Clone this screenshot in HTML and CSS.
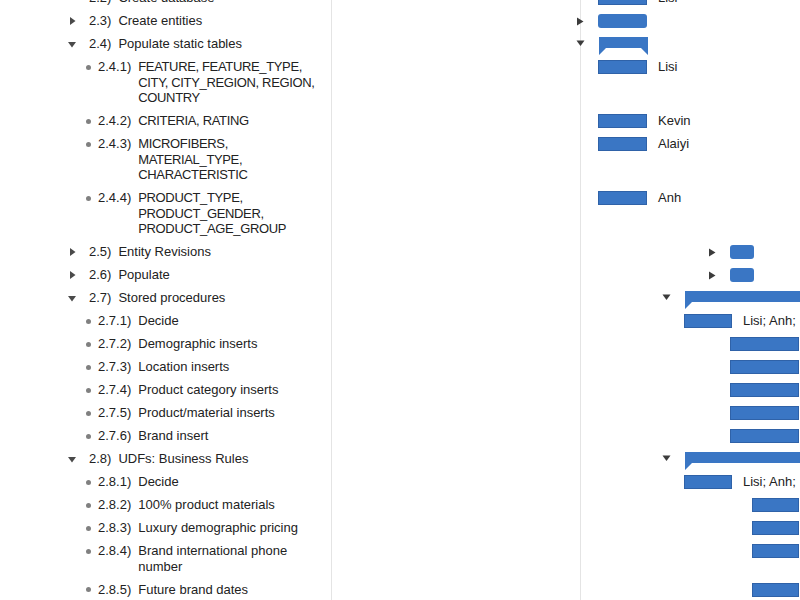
FILE: index.html
```html
<!DOCTYPE html>
<html>
<head>
<meta charset="utf-8">
<link rel="stylesheet" href="styles.css">
</head>
<body>
<div class="sheet">
  <div class="row">
    <div class="outline l2"><span class="tog"></span><span class="num">2.2)</span><span class="title">Create database</span></div>
    <div class="mid"></div>
    <div class="gantt" style="padding-left:17px"><span class="bar task" style="width:49px"></span><span class="who">Lisi</span></div>
  </div>
  <div class="row">
    <div class="outline l2"><span class="tog"><svg width="10" height="10" viewBox="0 0 10 10"><path d="M3 1 L8.5 5 L3 9 Z"/></svg></span><span class="num">2.3)</span><span class="title">Create entities</span></div>
    <div class="mid"></div>
    <div class="gantt" style="padding-left:17px"><span class="gtog"><svg width="8" height="9" viewBox="0 0 8 9"><path d="M1 0.5 L7.5 4.5 L1 8.5 Z"/></svg></span><span class="bar summary" style="width:49px"></span></div>
  </div>
  <div class="row">
    <div class="outline l2"><span class="tog"><svg width="10" height="10" viewBox="0 0 10 10"><path d="M1 3 L9 3 L5 8.5 Z"/></svg></span><span class="num">2.4)</span><span class="title">Populate static tables</span></div>
    <div class="mid"></div>
    <div class="gantt" style="padding-left:17px"><span class="gtog down"><svg width="9" height="7" viewBox="0 0 9 7"><path d="M0.5 0.5 L8.5 0.5 L4.5 6 Z"/></svg></span><span class="bar group" style="width:49px"></span></div>
  </div>
  <div class="row">
    <div class="outline l3"><span class="dot"></span><span class="num">2.4.1)</span><span class="title caps">FEATURE, FEATURE_TYPE, CITY, CITY_REGION, REGION, COUNTRY</span></div>
    <div class="mid"></div>
    <div class="gantt" style="padding-left:17px"><span class="bar task" style="width:49px"></span><span class="who">Lisi</span></div>
  </div>
  <div class="row">
    <div class="outline l3"><span class="dot"></span><span class="num">2.4.2)</span><span class="title caps">CRITERIA, RATING</span></div>
    <div class="mid"></div>
    <div class="gantt" style="padding-left:17px"><span class="bar task" style="width:49px"></span><span class="who">Kevin</span></div>
  </div>
  <div class="row">
    <div class="outline l3"><span class="dot"></span><span class="num">2.4.3)</span><span class="title caps">MICROFIBERS, MATERIAL_TYPE, CHARACTERISTIC</span></div>
    <div class="mid"></div>
    <div class="gantt" style="padding-left:17px"><span class="bar task" style="width:49px"></span><span class="who">Alaiyi</span></div>
  </div>
  <div class="row">
    <div class="outline l3"><span class="dot"></span><span class="num">2.4.4)</span><span class="title caps">PRODUCT_TYPE, PRODUCT_GENDER, PRODUCT_AGE_GROUP</span></div>
    <div class="mid"></div>
    <div class="gantt" style="padding-left:17px"><span class="bar task" style="width:49px"></span><span class="who">Anh</span></div>
  </div>
  <div class="row">
    <div class="outline l2"><span class="tog"><svg width="10" height="10" viewBox="0 0 10 10"><path d="M3 1 L8.5 5 L3 9 Z"/></svg></span><span class="num">2.5)</span><span class="title">Entity Revisions</span></div>
    <div class="mid"></div>
    <div class="gantt" style="padding-left:149px"><span class="gtog"><svg width="8" height="9" viewBox="0 0 8 9"><path d="M1 0.5 L7.5 4.5 L1 8.5 Z"/></svg></span><span class="bar summary" style="width:24px"></span></div>
  </div>
  <div class="row">
    <div class="outline l2"><span class="tog"><svg width="10" height="10" viewBox="0 0 10 10"><path d="M3 1 L8.5 5 L3 9 Z"/></svg></span><span class="num">2.6)</span><span class="title">Populate</span></div>
    <div class="mid"></div>
    <div class="gantt" style="padding-left:149px"><span class="gtog"><svg width="8" height="9" viewBox="0 0 8 9"><path d="M1 0.5 L7.5 4.5 L1 8.5 Z"/></svg></span><span class="bar summary" style="width:24px"></span></div>
  </div>
  <div class="row">
    <div class="outline l2"><span class="tog"><svg width="10" height="10" viewBox="0 0 10 10"><path d="M1 3 L9 3 L5 8.5 Z"/></svg></span><span class="num">2.7)</span><span class="title">Stored procedures</span></div>
    <div class="mid"></div>
    <div class="gantt" style="padding-left:103px"><span class="gtog down"><svg width="9" height="7" viewBox="0 0 9 7"><path d="M0.5 0.5 L8.5 0.5 L4.5 6 Z"/></svg></span><span class="bar group cont"></span></div>
  </div>
  <div class="row">
    <div class="outline l3"><span class="dot"></span><span class="num">2.7.1)</span><span class="title">Decide</span></div>
    <div class="mid"></div>
    <div class="gantt" style="padding-left:103px"><span class="bar task" style="width:48px"></span><span class="who">Lisi; Anh;</span></div>
  </div>
  <div class="row">
    <div class="outline l3"><span class="dot"></span><span class="num">2.7.2)</span><span class="title">Demographic inserts</span></div>
    <div class="mid"></div>
    <div class="gantt" style="padding-left:149px"><span class="bar task cont"></span></div>
  </div>
  <div class="row">
    <div class="outline l3"><span class="dot"></span><span class="num">2.7.3)</span><span class="title">Location inserts</span></div>
    <div class="mid"></div>
    <div class="gantt" style="padding-left:149px"><span class="bar task cont"></span></div>
  </div>
  <div class="row">
    <div class="outline l3"><span class="dot"></span><span class="num">2.7.4)</span><span class="title">Product category inserts</span></div>
    <div class="mid"></div>
    <div class="gantt" style="padding-left:149px"><span class="bar task cont"></span></div>
  </div>
  <div class="row">
    <div class="outline l3"><span class="dot"></span><span class="num">2.7.5)</span><span class="title">Product/material inserts</span></div>
    <div class="mid"></div>
    <div class="gantt" style="padding-left:149px"><span class="bar task cont"></span></div>
  </div>
  <div class="row">
    <div class="outline l3"><span class="dot"></span><span class="num">2.7.6)</span><span class="title">Brand insert</span></div>
    <div class="mid"></div>
    <div class="gantt" style="padding-left:149px"><span class="bar task cont"></span></div>
  </div>
  <div class="row">
    <div class="outline l2"><span class="tog"><svg width="10" height="10" viewBox="0 0 10 10"><path d="M1 3 L9 3 L5 8.5 Z"/></svg></span><span class="num">2.8)</span><span class="title">UDFs: Business Rules</span></div>
    <div class="mid"></div>
    <div class="gantt" style="padding-left:103px"><span class="gtog down"><svg width="9" height="7" viewBox="0 0 9 7"><path d="M0.5 0.5 L8.5 0.5 L4.5 6 Z"/></svg></span><span class="bar group cont"></span></div>
  </div>
  <div class="row">
    <div class="outline l3"><span class="dot"></span><span class="num">2.8.1)</span><span class="title">Decide</span></div>
    <div class="mid"></div>
    <div class="gantt" style="padding-left:103px"><span class="bar task" style="width:48px"></span><span class="who">Lisi; Anh;</span></div>
  </div>
  <div class="row">
    <div class="outline l3"><span class="dot"></span><span class="num">2.8.2)</span><span class="title">100% product materials</span></div>
    <div class="mid"></div>
    <div class="gantt" style="padding-left:171px"><span class="bar task cont"></span></div>
  </div>
  <div class="row">
    <div class="outline l3"><span class="dot"></span><span class="num">2.8.3)</span><span class="title">Luxury demographic pricing</span></div>
    <div class="mid"></div>
    <div class="gantt" style="padding-left:171px"><span class="bar task cont"></span></div>
  </div>
  <div class="row">
    <div class="outline l3"><span class="dot"></span><span class="num">2.8.4)</span><span class="title">Brand international phone number</span></div>
    <div class="mid"></div>
    <div class="gantt" style="padding-left:171px"><span class="bar task cont"></span></div>
  </div>
  <div class="row">
    <div class="outline l3"><span class="dot"></span><span class="num">2.8.5)</span><span class="title">Future brand dates</span></div>
    <div class="mid"></div>
    <div class="gantt" style="padding-left:171px"><span class="bar task cont"></span></div>
  </div>
  <div class="row filler">
    <div class="outline"></div>
    <div class="mid"></div>
    <div class="gantt"></div>
  </div>
</div>
</body>
</html>
```

FILE: styles.css
```css
html, body {
  margin: 0;
  padding: 0;
  background: #ffffff;
  overflow: hidden;
  width: 800px;
  height: 600px;
}

body {
  font-family: "Liberation Sans", Arial, Helvetica, sans-serif;
  font-size: 13px;
  color: #222222;
}

.sheet {
  margin-top: -14px;
}

.row {
  display: grid;
  grid-template-columns: 332px 249px minmax(0, 1fr);
}

.row.filler {
  min-height: 10px;
}

.outline {
  display: flex;
  align-items: flex-start;
  line-height: 15.5px;
  padding: 4px 10px 3.5px 0;
  border-right: 1px solid #e4e4e4;
}

.mid {
  border-right: 1px solid #e4e4e4;
}

.outline.l2 {
  padding-left: 67px;
}

.outline.l3 {
  padding-left: 86px;
}

.tog {
  flex: 0 0 10px;
  height: 15px;
  display: flex;
  align-items: center;
  justify-content: center;
}

.tog svg {
  fill: #4a4a4a;
}

.l2 .num {
  margin-left: 12px;
}

.dot {
  flex: 0 0 5px;
  width: 5px;
  height: 5px;
  margin-top: 5.5px;
  border-radius: 50%;
  background: #808080;
}

.l3 .num {
  margin-left: 7px;
}

.num {
  flex: 0 0 auto;
  white-space: nowrap;
}

.title {
  margin-left: 7px;
  flex: 1 1 auto;
  min-width: 0;
}

.title.caps {
  letter-spacing: -0.35px;
}

.gantt {
  display: flex;
  align-items: flex-start;
  padding-top: 5px;
  white-space: nowrap;
  min-width: 0;
}

.gtog {
  flex: 0 0 8px;
  height: 14px;
  margin-left: -22px;
  margin-right: 14px;
  display: flex;
  align-items: center;
  justify-content: center;
}

.gtog.down {
  height: 11px;
  margin-top: 1px;
}

.gtog svg {
  fill: #3c3c3c;
}

.bar {
  flex: 0 0 auto;
  display: block;
  box-sizing: border-box;
  height: 14px;
  background: #3a76c4;
}

.bar.cont {
  flex: 1 1 auto;
  min-width: 0;
}

.bar.task {
  border: 1px solid #2f62a8;
}

.bar.task.cont {
  margin-right: 1px;
}

.bar.summary {
  border-radius: 3px;
}

.bar.group {
  height: 18px;
  clip-path: polygon(0 0, 100% 0, 100% 100%, calc(100% - 7px) 11px, 7px 11px, 0 100%);
}

.bar.group.cont {
  clip-path: polygon(0 0, 100% 0, 100% 11px, 7px 11px, 0 100%);
}

.who {
  margin-left: 11px;
  line-height: 14px;
  color: #222222;
}
```
